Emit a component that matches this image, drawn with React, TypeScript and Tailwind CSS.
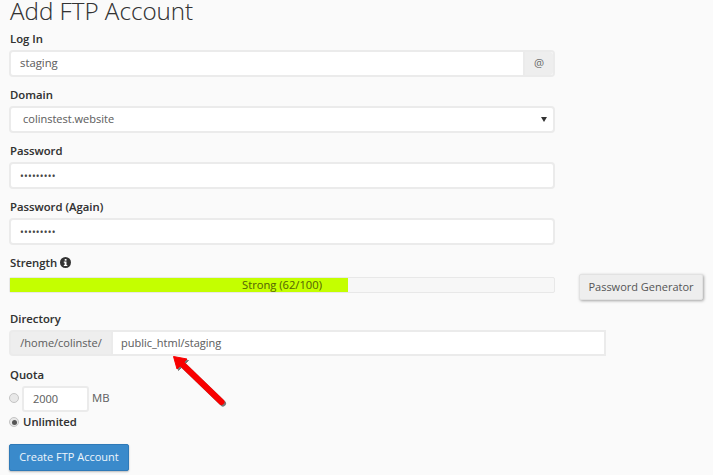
import React from "react";

const inputBox = "h-[27px] w-[546px] rounded-[4px] border-2 border-[#ebebeb] bg-white flex items-center text-[11px] text-[#666]";

function Label({ children, className = "" }: { children: React.ReactNode; className?: string }) {
  return <div className={`h-[16px] pl-[1px] leading-[13px] text-[11.3px] font-semibold text-[#333] ${className}`}>{children}</div>;
}

function Dots() {
  return <span className="text-[10px] tracking-[0.2px] text-[#444] leading-none">•••••••••</span>;
}

export default function App() {
  return (
    <div className="relative w-[713px] h-[475px] overflow-hidden bg-[#fafafa] pl-[9px] font-['Open_Sans',sans-serif] [text-shadow:0_0_0.6px_rgba(80,80,80,0.25)]">
      <h1 className="h-[25px] pl-[1px] leading-[21px] text-[24.2px] font-light text-[#333]">Add FTP Account</h1>

      <Label className="mt-[7px]">Log In</Label>
      <div className="mt-[2px] flex h-[27px] w-[546px] rounded-[4px] border-2 border-[#ebebeb] bg-white text-[11.3px] text-[#666]">
        <div className="flex-1 flex items-center pl-[9px] pb-[1px]">staging</div>
        <div className="w-[30px] flex items-center justify-center bg-[#eeeeee] border-l-2 border-[#ebebeb] rounded-r-[3px] text-[#777]">@</div>
      </div>

      <Label className="mt-[11px]">Domain</Label>
      <div className={`mt-[2px] ${inputBox} justify-between pl-[12px] pr-[6px]`}>
        <span>colinstest.website</span>
        <svg width="6" height="5" viewBox="0 0 6 5"><path d="M0 0h6L3 5z" fill="#333" /></svg>
      </div>

      <Label className="mt-[11px]">Password</Label>
      <div className={`mt-[2px] ${inputBox} pl-[9px]`}><Dots /></div>

      <Label className="mt-[11px]">Password (Again)</Label>
      <div className={`mt-[2px] ${inputBox} pl-[9px]`}><Dots /></div>

      <Label className="mt-[11px] flex items-center gap-[3px] pb-[3px]">
        Strength
        <svg width="11" height="11" viewBox="0 0 11 11">
          <circle cx="5.5" cy="5.5" r="5.5" fill="#333" />
          <rect x="4.7" y="2" width="1.8" height="1.7" fill="#fff" />
          <path d="M3.8 4.6h2.7v3.3h.8v1.1H3.8V7.9h.8V5.7h-.8z" fill="#fff" />
        </svg>
      </Label>
      <div className="mt-[2px] flex items-start">
        <div className="relative mt-[3px] h-[16px] w-[546px] rounded-[2px] border border-[#e8e8e8] bg-[#f7f7f7]">
          <div className="h-full w-[338px] bg-[#c4ff00]" />
          <div className="absolute inset-0 flex items-center justify-center text-[11.2px] leading-none text-[#5a6b00]">Strong (62/100)</div>
        </div>
        <button className="ml-[24px] h-[26px] w-[124px] rounded-[2px] border border-[#e2e2e2] bg-[#eeeeee] text-[11px] text-[#555] shadow-[1px_1px_3px_rgba(0,0,0,0.35)]">Password Generator</button>
      </div>

      <Label className="mt-[12px]">Directory</Label>
      <div className="mt-[2px] flex h-[26px] w-[597px] text-[11px] text-[#666]">
        <div className="w-[102px] flex items-center justify-center rounded-l-[4px] border-2 border-r-0 border-[#ebebeb] bg-[#eeeeee]">/home/colinste/</div>
        <div className="flex-1 flex items-center pl-[8px] border-2 border-[#ebebeb] bg-white">public_html/staging</div>
      </div>

      <Label className="mt-[12px]">Quota</Label>
      <div className="mt-[2px] flex items-center h-[26px]">
        <div className="-mt-[3px] w-[10px] h-[10px] rounded-full border border-[#c4c4c4] bg-[#e8e8e8]" />
        <div className="ml-[3px] w-[67px] h-[26px] rounded-[3px] border-2 border-[#ebebeb] bg-white flex items-center pl-[9px] text-[11px] text-[#666]">2000</div>
        <span className="ml-[3px] -mt-[1px] text-[11.3px] text-[#666]">MB</span>
      </div>
      <div className="mt-[2px] flex items-center h-[16px]">
        <div className="w-[10px] h-[10px] rounded-full border border-[#c4c4c4] bg-[#e8e8e8] flex items-center justify-center">
          <div className="w-[5px] h-[5px] rounded-full bg-[#555]" />
        </div>
        <span className="ml-[4px] text-[11.3px] font-semibold text-[#333]">Unlimited</span>
      </div>

      <button className="mt-[14px] block h-[27px] w-[120px] rounded-[2px] border border-[#2f7ab8] bg-[#3a8acb] text-[11px] text-[#eef5fb] shadow-[0_1px_2px_rgba(0,0,0,0.25)]">Create FTP Account</button>

      <svg className="absolute left-[170px] top-[352px]" width="62" height="58" viewBox="0 0 62 58">
        <g transform="translate(1.5 1.5)" opacity="0.6">
          <path d="M3.5 4.5 L17 7 L7 17 Z" fill="#222" stroke="#222" strokeWidth="1" strokeLinejoin="round" />
          <path d="M11 11 L51.5 50" stroke="#222" strokeWidth="6" strokeLinecap="round" />
        </g>
        <path d="M3.5 4.5 L17 7 L7 17 Z" fill="#f80000" stroke="#f80000" strokeWidth="1" strokeLinejoin="round" />
        <path d="M11 11 L51.5 50" stroke="#f80000" strokeWidth="6" strokeLinecap="round" />
      </svg>
    </div>
  );
}
